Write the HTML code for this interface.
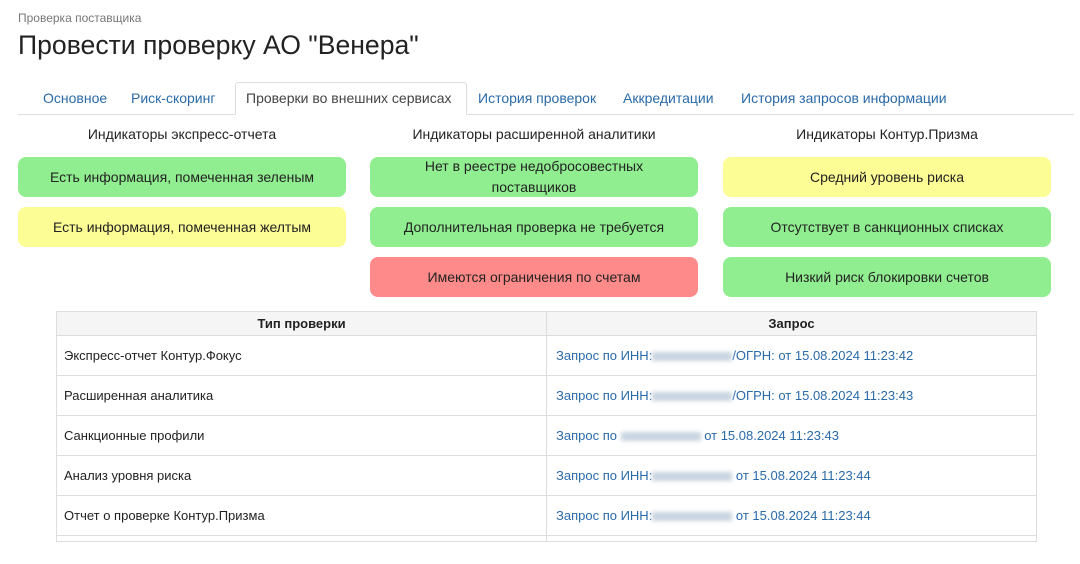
<!DOCTYPE html>
<html><head><meta charset="utf-8"><style>
*{margin:0;padding:0;box-sizing:border-box}
body{width:1080px;height:564px;background:#fff;font-family:"Liberation Sans",sans-serif;color:#222;position:relative;overflow:hidden}
.a{position:absolute;white-space:nowrap}
.tab{position:absolute;top:90px;font-size:14px;color:#2a6aa8}
.box{position:absolute;width:328px;height:40px;border-radius:8px;display:flex;align-items:center;justify-content:center;text-align:center;font-size:14px;color:#222;line-height:21px}
.g{background:#90ee90}.y{background:#fdfd96}.r{background:#ff8a8a}
.h{position:absolute;top:126px;width:328px;text-align:center;font-size:14px;color:#222}
table{position:absolute;left:56px;top:311px;width:981px;border-collapse:collapse;font-size:13px}
td,th{border:1px solid #ddd;padding:0 7px;height:40px;text-align:left;font-weight:normal}
th{height:24px;background:#f5f5f5;text-align:center;font-weight:bold;color:#222}
td a{color:#2a6aa8;text-decoration:none}
.bl{display:inline-block;height:9px;background:#c8d4e0;filter:blur(2px);vertical-align:middle}
</style></head><body>
<div class="a" style="left:18px;top:11px;font-size:12px;color:#777">Проверка поставщика</div>
<div class="a" style="left:18px;top:30px;font-size:26.6px;color:#222">Провести проверку АО "Венера"</div>
<div class="a" style="left:18px;top:114px;width:1056px;height:1px;background:#ddd"></div>
<div class="a" style="left:235px;top:82px;width:232px;height:33px;border:1px solid #ddd;border-bottom:1px solid #fff;border-radius:3px 3px 0 0;background:#fff"></div>
<div class="tab" style="left:43px">Основное</div>
<div class="tab" style="left:131px">Риск-скоринг</div>
<div class="tab" style="left:246px;color:#444">Проверки во внешних сервисах</div>
<div class="tab" style="left:478px">История проверок</div>
<div class="tab" style="left:623px">Аккредитации</div>
<div class="tab" style="left:741px">История запросов информации</div>
<div class="h" style="left:18px">Индикаторы экспресс-отчета</div>
<div class="h" style="left:370px">Индикаторы расширенной аналитики</div>
<div class="h" style="left:723px">Индикаторы Контур.Призма</div>
<div class="box g" style="left:18px;top:157px">Есть информация, помеченная зеленым</div>
<div class="box y" style="left:18px;top:207px">Есть информация, помеченная желтым</div>
<div class="box g" style="left:370px;top:157px">Нет в реестре недобросовестных<br>поставщиков</div>
<div class="box g" style="left:370px;top:207px">Дополнительная проверка не требуется</div>
<div class="box r" style="left:370px;top:257px">Имеются ограничения по счетам</div>
<div class="box y" style="left:723px;top:157px">Средний уровень риска</div>
<div class="box g" style="left:723px;top:207px">Отсутствует в санкционных списках</div>
<div class="box g" style="left:723px;top:257px">Низкий риск блокировки счетов</div>
<table>
<tr><th style="width:490px">Тип проверки</th><th>Запрос</th></tr>
<tr><td>Экспресс-отчет Контур.Фокус</td><td style="padding-left:9px"><a>Запрос по ИНН:<span class="bl" style="width:80px"></span>/ОГРН: от 15.08.2024 11:23:42</a></td></tr>
<tr><td>Расширенная аналитика</td><td style="padding-left:9px"><a>Запрос по ИНН:<span class="bl" style="width:80px"></span>/ОГРН: от 15.08.2024 11:23:43</a></td></tr>
<tr><td>Санкционные профили</td><td style="padding-left:9px"><a>Запрос по <span class="bl" style="width:80px"></span> от 15.08.2024 11:23:43</a></td></tr>
<tr><td>Анализ уровня риска</td><td style="padding-left:9px"><a>Запрос по ИНН:<span class="bl" style="width:80px"></span> от 15.08.2024 11:23:44</a></td></tr>
<tr><td>Отчет о проверке Контур.Призма</td><td style="padding-left:9px"><a>Запрос по ИНН:<span class="bl" style="width:80px"></span> от 15.08.2024 11:23:44</a></td></tr>
<tr><td style="height:6px"></td><td style="height:6px"></td></tr>
</table>
</body></html>
